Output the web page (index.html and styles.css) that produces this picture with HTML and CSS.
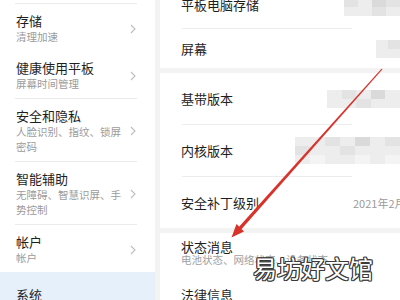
FILE: index.html
```html
<!DOCTYPE html>
<html lang="zh-CN">
<head>
<meta charset="utf-8">
<title>设置</title>
<link rel="stylesheet" href="styles.css">
</head>
<body>
<div class="app">
  <aside class="sidebar">
    <div class="sep"></div>
    <div class="item">
      <div class="txt"><div class="title">存储</div><div class="sub">清理加速</div></div>
      <svg class="chev" viewBox="0 0 6 10"><polyline points="1,1 5,5 1,9"/></svg>
    </div>
    <div class="item">
      <div class="txt"><div class="title">健康使用平板</div><div class="sub">屏幕时间管理</div></div>
      <svg class="chev" viewBox="0 0 6 10"><polyline points="1,1 5,5 1,9"/></svg>
    </div>
    <div class="sep"></div>
    <div class="item">
      <div class="txt"><div class="title">安全和隐私</div><div class="sub">人脸识别、指纹、锁屏密码</div></div>
      <svg class="chev" viewBox="0 0 6 10"><polyline points="1,1 5,5 1,9"/></svg>
    </div>
    <div class="sep"></div>
    <div class="item">
      <div class="txt"><div class="title">智能辅助</div><div class="sub">无障碍、智慧识屏、手势控制</div></div>
      <svg class="chev" viewBox="0 0 6 10"><polyline points="1,1 5,5 1,9"/></svg>
    </div>
    <div class="sep"></div>
    <div class="item">
      <div class="txt"><div class="title">帐户</div><div class="sub">帐户</div></div>
      <svg class="chev" viewBox="0 0 6 10"><polyline points="1,1 5,5 1,9"/></svg>
    </div>
    <div class="item active">
      <div class="txt"><div class="title">系统</div></div>
    </div>
  </aside>

  <main class="main">
    <section class="card card-top">
      <div class="row row-a">
        <span class="label">平板电脑存储</span>
        <div class="mosaic mz-a">
          <i class="m2"></i><i class="m1"></i><i class="m3"></i><i class="m2"></i>
          <i class="m1"></i><i class="m1"></i><i class="m2"></i><i class="m1"></i>
        </div>
      </div>
      <div class="rsep"></div>
      <div class="row row-b">
        <span class="label">屏幕</span>
        <div class="mosaic mz-b">
          <i class="m1"></i><i class="m2"></i>
          <i class="m1"></i><i class="m1"></i>
        </div>
      </div>
    </section>

    <section class="card">
      <div class="row row-c">
        <span class="label">基带版本</span>
        <div class="mosaic mz-c">
          <i class="m1"></i><i class="m2"></i><i class="m1"></i><i class="m3"></i><i class="m1"></i>
          <i class="m1"></i><i class="m1"></i><i class="m2"></i><i class="m1"></i><i class="m1"></i>
        </div>
      </div>
      <div class="rsep"></div>
      <div class="row row-c">
        <span class="label">内核版本</span>
        <div class="mosaic mz-d">
          <i class="m1"></i><i class="m1"></i><i class="m2"></i><i class="m1"></i><i class="m3"></i><i class="m1"></i><i class="m2"></i>
          <i class="m2"></i><i class="m1"></i><i class="m1"></i><i class="m2"></i><i class="m1"></i><i class="m1"></i><i class="m1"></i>
          <i class="m1"></i><i class="m0"></i><i class="m1"></i><i class="m1"></i><i class="m0"></i><i class="m1"></i><i class="m0"></i>
        </div>
      </div>
      <div class="rsep"></div>
      <div class="row row-c">
        <span class="label">安全补丁级别</span>
        <span class="value">2021年2月1日</span>
      </div>
    </section>

    <section class="card">
      <div class="row row-two">
        <div class="txt-r">
          <div class="label">状态消息</div>
          <div class="rsub">电池状态、网络状态、设备状态</div>
        </div>
      </div>
      <div class="row row-last">
        <span class="label">法律信息</span>
      </div>
    </section>
  </main>

  <svg class="arrow" viewBox="0 0 400 300">
    <polygon points="382.5,69.3 381.5,68.7 238.6,227.2 241.4,229.2"/>
    <polygon points="231.5,237.5 244,231.5 236.5,224"/>
  </svg>

  <div class="watermark">易坊好文馆</div>
</div>
</body>
</html>
```

FILE: styles.css
```css
* {
  box-sizing: border-box;
}

html, body {
  margin: 0;
  padding: 0;
}

body {
  width: 400px;
  height: 300px;
  overflow: hidden;
  background: #f3f3f3;
  font-family: "Noto Sans CJK SC", "Noto Sans", sans-serif;
}

.app {
  position: relative;
  display: flex;
  width: 400px;
  height: 300px;
  overflow: hidden;
}

/* ---------- sidebar ---------- */
.sidebar {
  width: 155px;
  flex: none;
  background: #ffffff;
  padding-top: 3px;
}

.sep {
  height: 1px;
  margin: 0 18px 0 15px;
  background: #ebebeb;
}

.item {
  display: flex;
  align-items: center;
  justify-content: space-between;
  padding: 9px 19px 7px 16px;
}

.txt {
  width: 108px;
}

.title {
  font-size: 13px;
  line-height: 16px;
  color: #1e1e1e;
  white-space: nowrap;
}

.sub {
  font-size: 10.5px;
  line-height: 15px;
  color: #9b9b9b;
}

.chev {
  width: 6px;
  height: 10px;
  flex: none;
}

.chev polyline {
  fill: none;
  stroke: #bdbdbd;
  stroke-width: 1.1;
}

.item.active {
  background: #e6f0fb;
  padding-top: 12px;
  height: 40px;
}

/* ---------- main ---------- */
.main {
  flex: 1;
  margin-left: 5px;
  display: flex;
  flex-direction: column;
  gap: 5px;
}

.card {
  background: #ffffff;
}

.card-top {
  margin-top: -14px;
}

.row {
  display: flex;
  align-items: center;
  justify-content: space-between;
  padding-left: 21px;
}

.row-a {
  height: 42px;
  align-items: flex-start;
  padding-top: 12px;
}

.row-b {
  height: 39px;
}

.row-c {
  height: 51px;
}

.row-two {
  padding-top: 7px;
  padding-bottom: 9px;
}

.row-last {
  padding-top: 13px;
  height: 40px;
  align-items: flex-start;
}

.label {
  font-size: 13px;
  line-height: 14px;
  color: #1e1e1e;
  white-space: nowrap;
}

.rsub {
  font-size: 10.5px;
  line-height: 12px;
  color: #a0a0a0;
  white-space: nowrap;
}

.value {
  width: 47px;
  flex: none;
  font-size: 11px;
  color: #9a9a9a;
  white-space: nowrap;
  overflow: visible;
}

.rsep {
  height: 1px;
  margin: 0 48px 0 22px;
  background: #ececec;
}

/* blurred (mosaic) values */
.mosaic {
  flex: none;
  display: grid;
  grid-auto-rows: 9px;
}

.mosaic i {
  display: block;
}

.mz-a {
  width: 56px;
  grid-template-columns: repeat(4, 14px);
}

.mz-b {
  width: 24px;
  grid-template-columns: repeat(2, 12px);
}

.mz-c {
  width: 73px;
  grid-template-columns: repeat(5, 1fr);
}

.mz-d {
  width: 105px;
  grid-template-columns: repeat(7, 1fr);
}

.m0 { background: #f4f4f4; }
.m1 { background: #ededed; }
.m2 { background: #e3e3e3; }
.m3 { background: #dadada; }

/* ---------- overlays ---------- */
.arrow {
  position: absolute;
  left: 0;
  top: 0;
  width: 400px;
  height: 300px;
  pointer-events: none;
}

.arrow polygon {
  fill: #d8322b;
}

.watermark {
  position: absolute;
  left: 253px;
  top: 253px;
  font-size: 24px;
  line-height: 30px;
  color: #ffffff;
  white-space: nowrap;
  text-shadow:
    1px 0 0 #3a3a3a, -1px 0 0 #3a3a3a, 0 1px 0 #3a3a3a, 0 -1px 0 #3a3a3a,
    1px 1px 0 #3a3a3a, -1px -1px 0 #3a3a3a, 1px -1px 0 #3a3a3a, -1px 1px 0 #3a3a3a;
}
```
